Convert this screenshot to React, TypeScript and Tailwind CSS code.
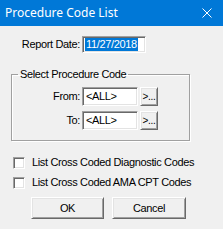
import React from "react";

const sunken =
  "bg-white border border-t-[#a0a0a0] border-l-[#a0a0a0] border-b-white border-r-white shadow-[inset_1px_1px_0_#696969,inset_-1px_-1px_0_#e3e3e3]";
const raised =
  "bg-[#f0f0f0] border border-t-white border-l-white border-b-[#696969] border-r-[#696969] shadow-[inset_1px_1px_0_#e3e3e3,inset_-1px_-1px_0_#a0a0a0]";

function CodeRow({ label }: { label: string }) {
  return (
    <div className="flex items-center h-[19px]">
      <span className="w-[70px] text-right pr-[2px]">{label}</span>
      <div className={`${sunken} w-[56px] h-[19px] flex items-center pl-[3px]`}>&lt;ALL&gt;</div>
      <div className={`${raised} ml-[2px] w-[18px] h-[19px] flex items-center justify-center text-[10px] leading-none`}>
        &gt;...
      </div>
    </div>
  );
}

function Check({ label }: { label: string }) {
  return (
    <div className="flex items-center h-[13px] pl-[13px]">
      <div className={`${sunken} w-[12px] h-[12px]`} />
      <span className="ml-[7px] whitespace-nowrap">{label}</span>
    </div>
  );
}

export default function App() {
  return (
    <div className="w-[223px] h-[229px] bg-[#f0f0f0] text-black text-[11px] leading-none tracking-[-0.35px] font-['Liberation_Sans',Arial,sans-serif] overflow-hidden">
      {/* Title bar */}
      <div className="h-[26px] bg-[#0078d7] flex items-center justify-between pl-[5px] pr-[11px] text-white tracking-normal">
        <span className="font-['Noto_Sans',sans-serif] text-[12px]">Procedure Code List</span>
        <svg width="10" height="10" viewBox="0 0 10 10">
          <path d="M0.5 0.5 L9.5 9.5 M9.5 0.5 L0.5 9.5" stroke="#fff" strokeWidth="1" />
        </svg>
      </div>

      {/* Report date */}
      <div className="flex items-center mt-[10px] h-[17px]">
        <span className="w-[82px] text-right pr-[2px]">Report Date:</span>
        <div className={`${sunken} w-[64px] h-[17px] flex items-center pl-[2px]`}>
          <span className="bg-[#0078d7] text-white px-[1px] py-[1px]">11/27/2018</span>
        </div>
      </div>

      {/* Group box */}
      <fieldset className="ml-[11px] mt-[16px] w-[179px] h-[72px] border border-[#a0a0a0] shadow-[1px_1px_0_#fff,inset_1px_1px_0_#fff] px-0 pt-[7px]">
        <legend className="ml-[6px] px-[2px] text-[11px]">Select Procedure Code</legend>
        <div className="flex flex-col gap-[5px]">
          <CodeRow label="From:" />
          <CodeRow label="To:" />
        </div>
      </fieldset>

      {/* Checkboxes */}
      <div className="flex flex-col gap-[7px] mt-[15px]">
        <Check label="List Cross Coded Diagnostic Codes" />
        <Check label="List Cross Coded AMA CPT Codes" />
      </div>

      {/* Buttons */}
      <div className="flex gap-[8px] pl-[31px] mt-[8px]">
        <div className={`${raised} w-[73px] h-[22px] flex items-center justify-center`}>OK</div>
        <div className={`${raised} w-[74px] h-[22px] flex items-center justify-center`}>Cancel</div>
      </div>
    </div>
  );
}
